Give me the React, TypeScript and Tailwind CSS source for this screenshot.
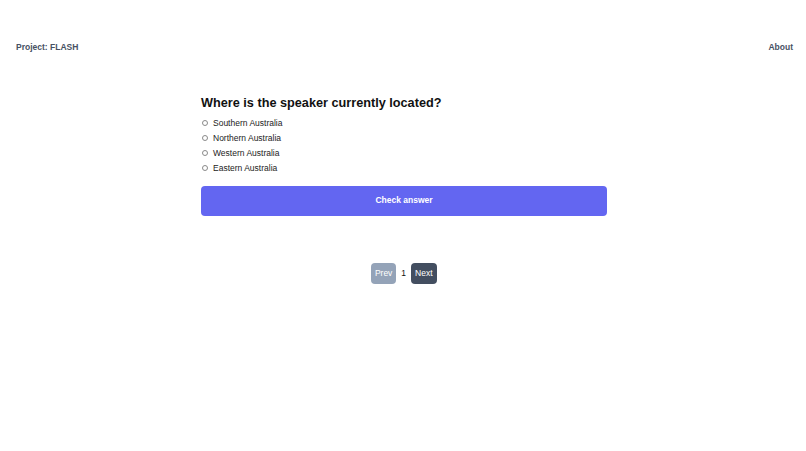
import { useState } from 'react';

const options = ['Southern Australia', 'Northern Australia', 'Western Australia', 'Eastern Australia'];

export default function App() {
  const [picked, setPicked] = useState<number | null>(null);

  return (
    <div className="min-h-screen bg-white font-['Liberation_Sans',Arial,sans-serif]">
      {/* Top bar */}
      <header className="h-[94px] flex items-center justify-between pl-4 pr-[13px] text-[8.5px] font-bold text-[#475163]">
        <span>Project: FLASH</span>
        <span>About</span>
      </header>

      {/* Question */}
      <div className="pl-[2px]">
        <main className="w-[406px] mx-auto">
          <h1 className="text-[12.7px] leading-[18px] font-bold text-[#111111]">
            Where is the speaker currently located?
          </h1>
          <div className="mt-[3.5px] flex flex-col">
            {options.map((opt, i) => (
              <label
                key={opt}
                className="flex items-center h-[15px] text-[8.5px] text-[#222222] cursor-pointer"
                onClick={() => setPicked(i)}
              >
                <span className="w-[6.5px] h-[6.5px] ml-[0.5px] rounded-full border border-[#8a8a8a] flex items-center justify-center">
                  {picked === i && <span className="w-[3px] h-[3px] rounded-full bg-[#374151]" />}
                </span>
                <span className="ml-[5px]">{opt}</span>
              </label>
            ))}
          </div>
          <button className="mt-[10.5px] w-full h-[29.5px] rounded-[4px] bg-[#6366f1] text-white text-[8.5px] font-bold">
            Check answer
          </button>

          {/* Pagination */}
          <div className="mt-[47px] flex items-center justify-center gap-[5px] text-[8.5px]">
            <button className="w-[25px] h-[21px] rounded-[4px] bg-[#94a3b8] text-white">Prev</button>
            <span className="text-[#111111]">1</span>
            <button className="w-[26px] h-[21px] rounded-[4px] bg-[#434e60] text-white">Next</button>
          </div>
        </main>
      </div>
    </div>
  );
}
